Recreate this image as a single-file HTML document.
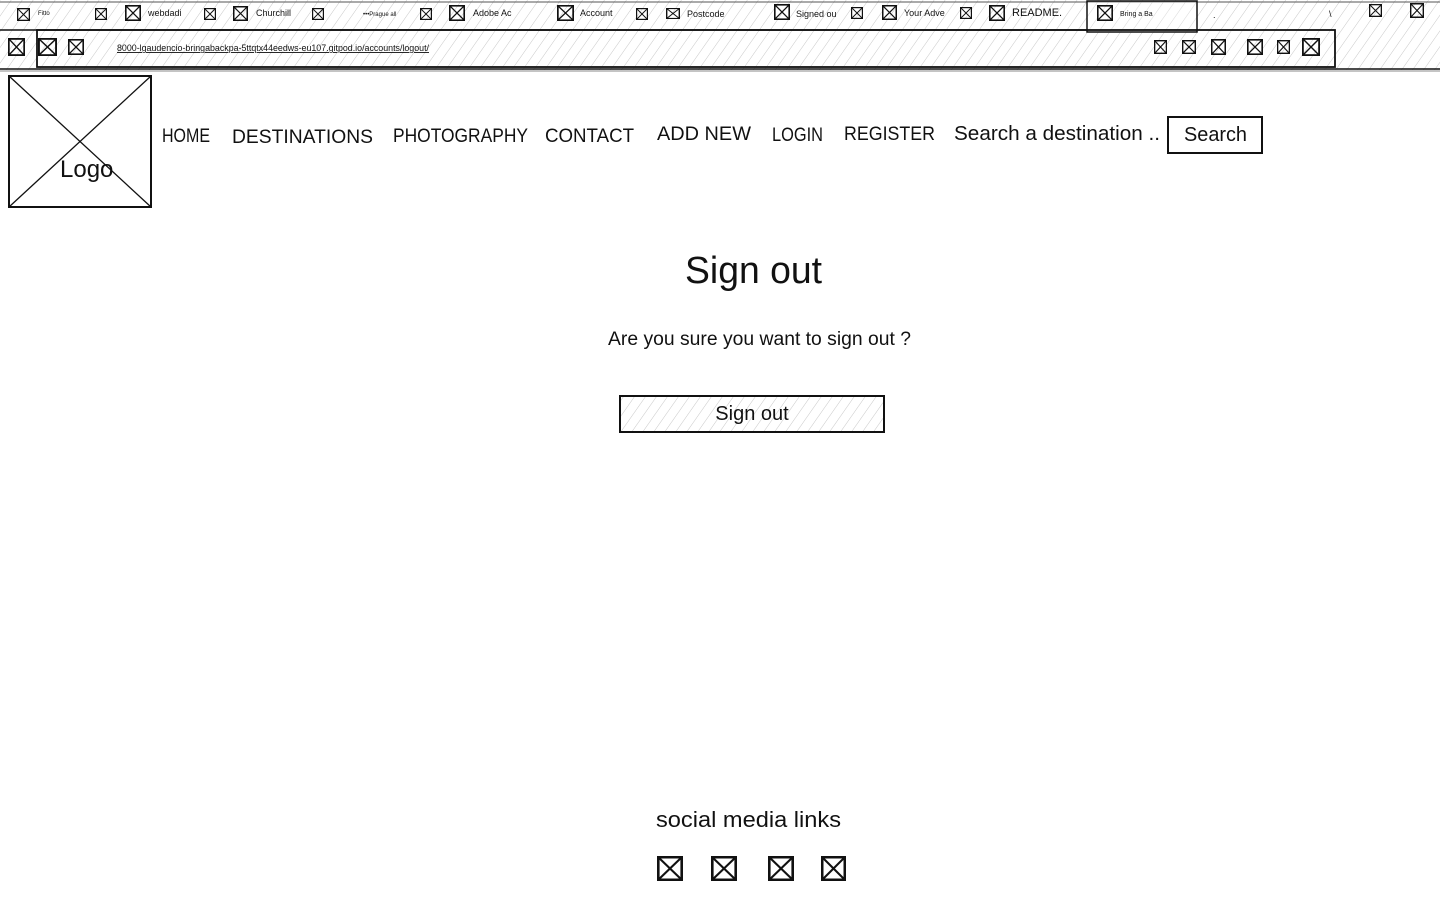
<!DOCTYPE html>
<html><head><meta charset="utf-8"><style>
html,body{margin:0;padding:0;background:#fff;width:1440px;height:900px;overflow:hidden}
svg{display:block}
text{font-family:"Liberation Sans",sans-serif;fill:#111}
</style></head><body>
<svg width="1440" height="900" viewBox="0 0 1440 900" xmlns="http://www.w3.org/2000/svg">
<defs>
<pattern id="h" width="9" height="9" patternUnits="userSpaceOnUse" patternTransform="rotate(35)">
<line x1="0" y1="0" x2="0" y2="9" stroke="#c8c8c8" stroke-width="1"/>
</pattern>
<symbol id="x" viewBox="0 0 20 20" preserveAspectRatio="none">
<rect x="1" y="1" width="18" height="18" fill="none" stroke="#111" stroke-width="2"/>
<line x1="1" y1="1" x2="19" y2="19" stroke="#111" stroke-width="1.6"/>
<line x1="19" y1="1" x2="1" y2="19" stroke="#111" stroke-width="1.6"/>
</symbol>
</defs>
<rect x="0" y="0" width="1440" height="70" fill="url(#h)"/>
<line x1="0" y1="30" x2="1087" y2="30" stroke="#111" stroke-width="1.5"/>
<line x1="0" y1="2" x2="1440" y2="2" stroke="#555" stroke-width="1"/>
<rect x="1087" y="1" width="110" height="31" fill="#fff" fill-opacity="0.3" stroke="#111" stroke-width="1.5"/>
<rect x="37" y="30" width="1298" height="37" fill="none" stroke="#111" stroke-width="1.8"/>
<line x1="0" y1="69" x2="1440" y2="69" stroke="#111" stroke-width="1.5"/>
<line x1="0" y1="71" x2="1440" y2="71" stroke="#888" stroke-width="1"/>
<use href="#x" x="17" y="8" width="13" height="13"/>
<use href="#x" x="95" y="8" width="12" height="12"/>
<use href="#x" x="125" y="5" width="16" height="16"/>
<use href="#x" x="204" y="8" width="12" height="12"/>
<use href="#x" x="233" y="6" width="15" height="15"/>
<use href="#x" x="312" y="8" width="12" height="12"/>
<use href="#x" x="420" y="8" width="12" height="12"/>
<use href="#x" x="449" y="5" width="16" height="16"/>
<use href="#x" x="557" y="5" width="17" height="16"/>
<use href="#x" x="636" y="8" width="12" height="12"/>
<use href="#x" x="666" y="8" width="14" height="11"/>
<use href="#x" x="774" y="4" width="16" height="16"/>
<use href="#x" x="851" y="7" width="12" height="12"/>
<use href="#x" x="882" y="5" width="15" height="15"/>
<use href="#x" x="960" y="7" width="12" height="12"/>
<use href="#x" x="989" y="5" width="16" height="16"/>
<use href="#x" x="1097" y="5" width="16" height="16"/>
<use href="#x" x="1369" y="4" width="13" height="13"/>
<use href="#x" x="1410" y="3" width="14" height="15"/>
<g font-size="9">
<text x="38" y="15" font-size="6">Fitto</text>
<text x="148" y="16">webdadi</text>
<text x="256" y="16">Churchill</text>
<text x="363" y="16" font-size="6">•••Prague all</text>
<text x="473" y="16">Adobe Ac</text>
<text x="580" y="16">Account</text>
<text x="687" y="17">Postcode</text>
<text x="796" y="17">Signed ou</text>
<text x="904" y="16">Your Adve</text>
<text x="1012" y="16" font-size="11">README.</text>
<text x="1120" y="16" font-size="7">Bring a Ba</text>
<text x="1213" y="18">.</text>
<text x="1329" y="17">\</text>
</g>
<use href="#x" x="8" y="38" width="17" height="18"/>
<use href="#x" x="38" y="38" width="19" height="18"/>
<use href="#x" x="68" y="39" width="16" height="16"/>
<use href="#x" x="1154" y="40" width="13" height="14"/>
<use href="#x" x="1182" y="40" width="14" height="14"/>
<use href="#x" x="1211" y="39" width="15" height="16"/>
<use href="#x" x="1247" y="39" width="16" height="16"/>
<use href="#x" x="1277" y="40" width="13" height="14"/>
<use href="#x" x="1302" y="38" width="18" height="18"/>
<text x="117" y="51" font-size="9" text-decoration="underline" textLength="312" lengthAdjust="spacingAndGlyphs">8000-lgaudencio-bringabackpa-5ttqtx44eedws-eu107.gitpod.io/accounts/logout/</text>
<rect x="9" y="76" width="142" height="131" fill="none" stroke="#111" stroke-width="2"/>
<line x1="9" y1="76" x2="151" y2="207" stroke="#111" stroke-width="1.3"/>
<line x1="151" y1="76" x2="9" y2="207" stroke="#111" stroke-width="1.3"/>
<text x="60" y="177" font-size="24">Logo</text>
<g font-size="19">
<text x="162" y="142" textLength="48" lengthAdjust="spacingAndGlyphs">HOME</text>
<text x="232" y="143" textLength="141" lengthAdjust="spacingAndGlyphs">DESTINATIONS</text>
<text x="393" y="142" textLength="135" lengthAdjust="spacingAndGlyphs">PHOTOGRAPHY</text>
<text x="545" y="142" textLength="89" lengthAdjust="spacingAndGlyphs">CONTACT</text>
<text x="657" y="140" textLength="94" lengthAdjust="spacingAndGlyphs">ADD NEW</text>
<text x="772" y="141" textLength="51" lengthAdjust="spacingAndGlyphs">LOGIN</text>
<text x="844" y="140" textLength="91" lengthAdjust="spacingAndGlyphs">REGISTER</text>
<text x="954" y="140" font-size="20" textLength="206" lengthAdjust="spacingAndGlyphs">Search a destination ..</text>
</g>
<rect x="1168" y="117" width="94" height="36" fill="none" stroke="#111" stroke-width="2"/>
<text x="1184" y="141" font-size="20" textLength="63" lengthAdjust="spacingAndGlyphs">Search</text>
<text x="685" y="283" font-size="38" textLength="137" lengthAdjust="spacingAndGlyphs">Sign out</text>
<text x="608" y="345" font-size="19" textLength="303" lengthAdjust="spacingAndGlyphs">Are you sure you want to sign out ?</text>
<rect x="620" y="396" width="264" height="36" fill="url(#h)" stroke="#111" stroke-width="2"/>
<text x="752" y="420" font-size="20" text-anchor="middle">Sign out</text>
<text x="656" y="827" font-size="22" textLength="185" lengthAdjust="spacingAndGlyphs">social media links</text>
<use href="#x" x="657" y="856" width="26" height="25"/>
<use href="#x" x="711" y="856" width="26" height="25"/>
<use href="#x" x="768" y="856" width="26" height="25"/>
<use href="#x" x="821" y="856" width="25" height="25"/>
</svg>
</body></html>
